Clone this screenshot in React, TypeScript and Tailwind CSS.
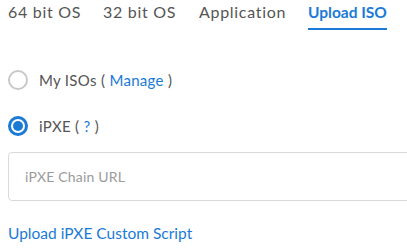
export default function App() {
  return (
    <div className="w-[407px] h-[250px] overflow-hidden bg-white font-['Lato',sans-serif] text-[#555]">
      <div className="flex items-start h-[31px] text-[16px] leading-[18px] tracking-[0.7px] whitespace-nowrap">
        <div className="w-[103px] shrink-0 pl-2 pt-[3px]">64 bit OS</div>
        <div className="w-[96px] shrink-0 pt-[3px]">32 bit OS</div>
        <div className="w-[109px] shrink-0 pt-[3px]">Application</div>
        <div className="flex flex-col shrink-0">
          <div className="pt-[3px] text-[15.5px] font-bold tracking-normal text-[#1a7ad6]">Upload ISO</div>
          <div className="mt-[7px] h-[2px] bg-[#1a7ad6]" />
        </div>
      </div>

      <div className="pl-2 pt-[38px] flex flex-col text-[15px] tracking-[0.3px]">
        <label className="flex items-center gap-[11px] h-5 mt-[1px]">
          <span className="w-5 h-5 rounded-full border-2 border-[#c8c8c8]" />
          <span>
            My ISOs ( <span className="text-[#1a7ad6]">Manage</span> )
          </span>
        </label>
        <label className="flex items-center gap-[11px] h-5 mt-[26px]">
          <span className="w-5 h-5 rounded-full border-[3px] border-[#1a7ad6] flex items-center justify-center">
            <span className="w-[10px] h-[10px] rounded-full bg-[#1a7ad6]" />
          </span>
          <span>
            iPXE ( <span className="text-[#1a7ad6]">?</span> )
          </span>
        </label>
        <div className="mt-[16px] h-[49px] w-[420px] rounded border border-[#d9d9d9] flex items-center pl-4">
          <span className="text-[14px] tracking-[0.2px] text-[#9a9a9a]">iPXE Chain URL</span>
        </div>
        <div className="mt-[21px] text-[15.5px] tracking-normal text-[#1a7ad6]">Upload iPXE Custom Script</div>
      </div>
    </div>
  );
}
